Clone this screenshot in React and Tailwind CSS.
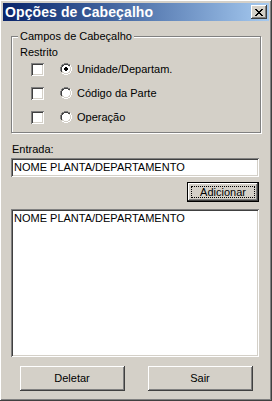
// Opções de Cabeçalho - classic Windows dialog

const raised =
  'shadow-[inset_-1px_-1px_#404040,inset_1px_1px_#ffffff,inset_-2px_-2px_#808080,inset_2px_2px_#d4d0c8]';
const sunken =
  'shadow-[inset_1px_1px_#808080,inset_-1px_-1px_#ffffff,inset_2px_2px_#404040,inset_-2px_-2px_#d4d0c8]';

function CheckBox() {
  return <div className={`w-[13px] h-[13px] bg-white shrink-0 ${sunken}`} />;
}

function Radio({ checked }) {
  return (
    <svg width="12" height="12" viewBox="0 0 12 12" className="shrink-0" shapeRendering="crispEdges">
      {/* outer ring */}
      <path d="M4 0h4v1H4zM2 1h2v1H2zM8 1h2v1H8zM1 2h1v2H1zM0 4h1v4H0z" fill="#808080" />
      <path d="M10 2h1v2h-1zM11 4h1v4h-1zM10 8h1v2h-1zM8 10h2v1H8zM4 11h4v1H4zM2 10h2v1H2z" fill="#ffffff" />
      {/* inner ring */}
      <path d="M4 1h4v1H4zM2 2h2v1H2zM8 2h2v1H8zM1 4h1v4H1zM2 3h1v1H2zM1 8h1v1H1z" fill="#404040" />
      <path d="M9 3h1v1H9zM10 4h1v4h-1zM9 8h1v1H9zM8 9h2v1H8zM4 10h4v1H4zM2 9h2v1H2z" fill="#d4d0c8" />
      {/* fill */}
      <path d="M4 2h4v1h1v1h1v4H9v1H8v1H4V9H3V8H2V4h1V3h1z" fill="#ffffff" />
      {checked && <path d="M5 4h2v1h1v2H7v1H5V7H4V5h1z" fill="#000000" />}
    </svg>
  );
}

function Button({ label, className = '', isDefault = false }) {
  if (isDefault) {
    return (
      <div className={`border border-black bg-[#d4d0c8] flex ${className}`}>
        <div className={`flex-1 flex items-center justify-center p-[3px] ${raised}`}>
          <div className="flex-1 h-full flex items-center justify-center border border-dotted border-black">
            {label}
          </div>
        </div>
      </div>
    );
  }
  return (
    <div className={`bg-[#d4d0c8] flex items-center justify-center ${raised} ${className}`}>
      {label}
    </div>
  );
}

function OptionRow({ checked, label }) {
  return (
    <div className="h-[24px] flex items-center">
      <div className="ml-[19px]">
        <CheckBox />
      </div>
      <div className="ml-[16px]">
        <Radio checked={checked} />
      </div>
      <span className="ml-[5px]">{label}</span>
    </div>
  );
}

export default function App() {
  return (
    <div
      className={`w-[272px] h-[401px] bg-[#d4d0c8] p-[3px] flex flex-col text-[11px] leading-[13px] text-black ${raised}`}
      style={{ fontFamily: '"Liberation Sans", Arial, sans-serif' }}
    >
      {/* Title bar */}
      <div className="h-[18px] shrink-0 flex items-center justify-between pl-[2px] pr-[2px] bg-gradient-to-r from-[#0a246a] to-[#a6caf0]">
        <span className="text-white font-bold text-[14px] leading-[18px] tracking-[0.1px]">Opções de Cabeçalho</span>
        <div className={`w-[16px] h-[14px] bg-[#d4d0c8] flex items-center justify-center ${raised}`}>
          <svg width="8" height="7" viewBox="0 0 8 7" shapeRendering="crispEdges">
            <path
              d="M0 0h2v1H0zM6 0h2v1H6zM1 1h2v1H1zM5 1h2v1H5zM2 2h4v1H2zM3 3h2v1H3zM2 4h4v1H2zM1 5h2v1H1zM5 5h2v1H5zM0 6h2v1H0zM6 6h2v1H6z"
              fill="#000"
            />
          </svg>
        </div>
      </div>

      <div className="flex-1 flex flex-col px-[8px]">
        {/* Group box */}
        <fieldset className="mt-[9px] border border-[#808080] shadow-[1px_1px_0_#ffffff,inset_1px_1px_0_#ffffff] pb-[3px]">
          <legend className="ml-[6px] px-[2px] bg-[#d4d0c8] leading-[13px]">Campos de Cabeçalho</legend>
          <div className="pl-[8px] pt-[3px] -mb-[2px]">Restrito</div>
          <OptionRow checked label="Unidade/Departam." />
          <OptionRow label="Código da Parte" />
          <OptionRow label="Operação" />
        </fieldset>

        {/* Entrada */}
        <div className="mt-[10px] pl-[1px]">Entrada:</div>
        <div className={`mt-[2px] mr-[2px] h-[19px] bg-white flex items-center pl-[3px] ${sunken}`}>
          NOME PLANTA/DEPARTAMENTO
        </div>

        <div className="mt-[5px] flex justify-end mr-[2px]">
          <Button label="Adicionar" isDefault className="w-[72px] h-[20px]" />
        </div>

        {/* List */}
        <div className={`mt-[7px] mr-[2px] h-[148px] bg-white px-[3px] pt-[3px] ${sunken}`}>
          NOME PLANTA/DEPARTAMENTO
        </div>

        {/* Bottom buttons */}
        <div className="mt-[9px] flex justify-center gap-[23px]">
          <Button label="Deletar" className="w-[105px] h-[25px]" />
          <Button label="Sair" className="w-[105px] h-[25px]" />
        </div>
      </div>
    </div>
  );
}
